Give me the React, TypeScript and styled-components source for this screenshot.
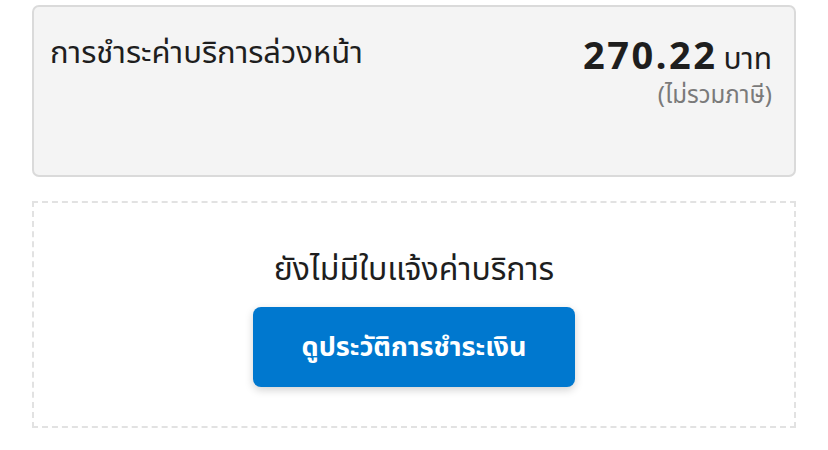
import React from 'react';
import styled, { createGlobalStyle } from 'styled-components';

const GlobalStyle = createGlobalStyle`
  html, body {
    margin: 0;
    padding: 0;
    background: #ffffff;
  }
  body {
    font-family: "Noto Sans", "Noto Sans Thai", sans-serif;
    color: #1e1e1e;
  }
`;

const Page = styled.div`
  display: flex;
  flex-direction: column;
  gap: 24px;
  padding: 5px 32px 0 32px;
  width: 764px;
`;

const SummaryCard = styled.div`
  display: flex;
  justify-content: space-between;
  align-items: flex-start;
  height: 172px;
  box-sizing: border-box;
  padding: 25px 22px 0 16px;
  background: #f4f4f4;
  border: 2px solid #dadada;
  border-radius: 7px;
`;

const Title = styled.div`
  font-size: 31px;
  line-height: 38px;
  color: #1e1e1e;
`;

const PriceBlock = styled.div`
  display: flex;
  flex-direction: column;
  align-items: flex-end;
`;

const Amount = styled.div`
  display: flex;
  align-items: baseline;
  gap: 6px;
  line-height: 44px;
`;

const Number = styled.span`
  font-size: 38px;
  font-weight: 700;
  letter-spacing: 2.5px;
  color: #1e1e1e;
`;

const Unit = styled.span`
  font-size: 30px;
  color: #1e1e1e;
`;

const Note = styled.div`
  font-size: 24px;
  line-height: 28px;
  color: #7a7a7a;
`;

const EmptyBox = styled.div`
  display: flex;
  flex-direction: column;
  align-items: center;
  gap: 18px;
  height: 227px;
  box-sizing: border-box;
  padding-top: 44px;
  border: 2px dashed #e2e2e2;
`;

const EmptyText = styled.div`
  font-size: 32px;
  line-height: 42px;
  color: #1e1e1e;
`;

const HistoryButton = styled.button`
  width: 322px;
  height: 80px;
  border: none;
  border-radius: 8px;
  background: #0078cf;
  color: #ffffff;
  font-family: inherit;
  font-size: 27px;
  font-weight: 700;
  box-shadow: 0 3px 8px rgba(0, 0, 0, 0.18);
  cursor: pointer;
`;

export default function App() {
  return (
    <>
      <GlobalStyle />
      <Page>
        <SummaryCard>
          <Title>การชำระค่าบริการล่วงหน้า</Title>
          <PriceBlock>
            <Amount>
              <Number>270.22</Number>
              <Unit>บาท</Unit>
            </Amount>
            <Note>(ไม่รวมภาษี)</Note>
          </PriceBlock>
        </SummaryCard>
        <EmptyBox>
          <EmptyText>ยังไม่มีใบแจ้งค่าบริการ</EmptyText>
          <HistoryButton>ดูประวัติการชำระเงิน</HistoryButton>
        </EmptyBox>
      </Page>
    </>
  );
}
